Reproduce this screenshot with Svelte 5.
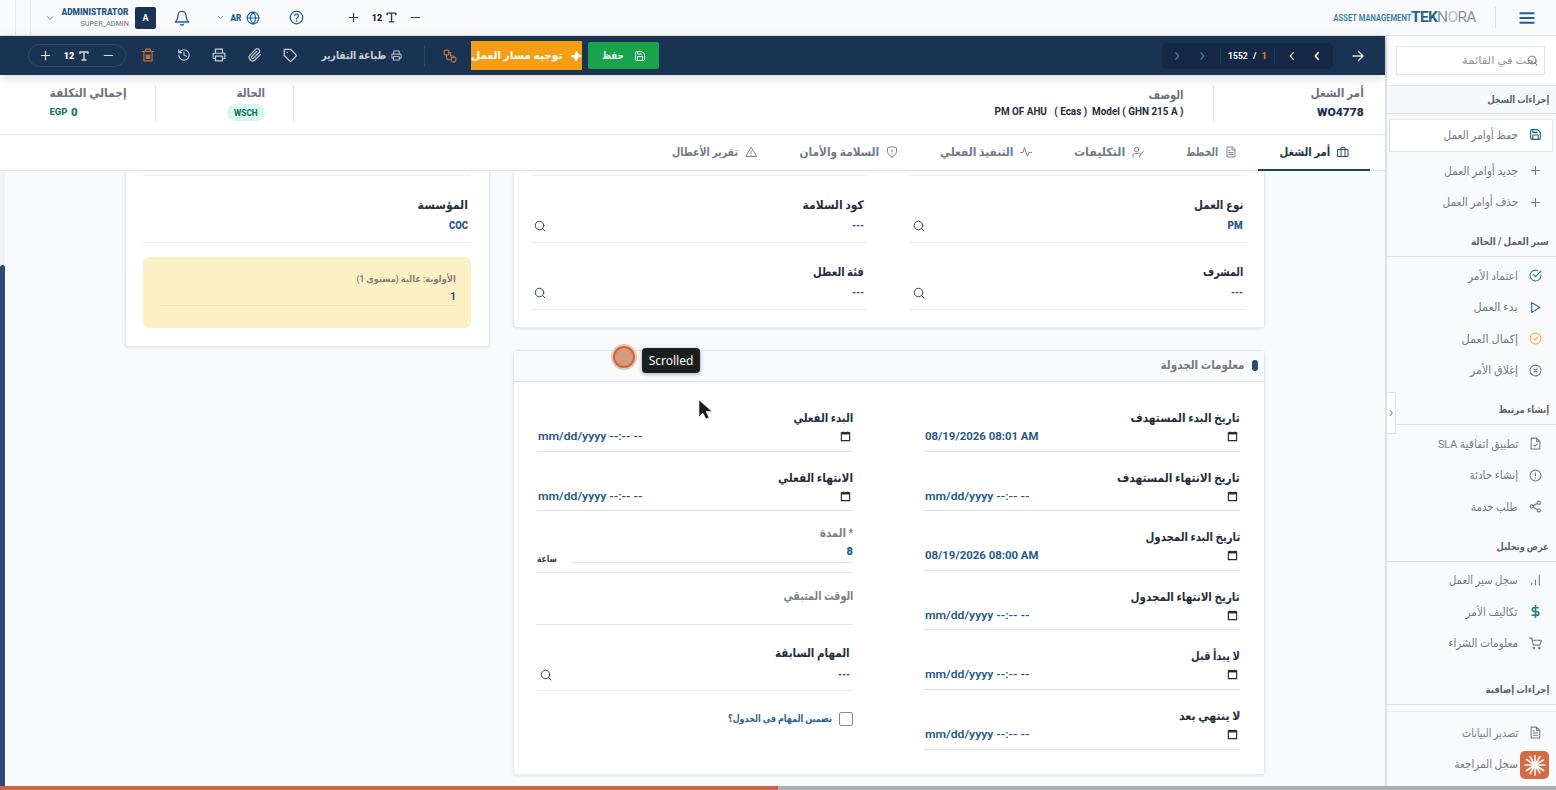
<script lang="ts">
  interface Field {
    label: string;
    width: number;
    value?: string;
    valueWidth?: number;
  }

  interface Item {
    icon: string;
    text: string;
    width: number;
    tone?: string;
    active?: boolean;
  }

  interface Section {
    title: string;
    width: number;
    kind: string;
    items: Item[];
  }

  const icons: Record<string, string> = {
    menu: '<path d="M2 5h20M2 12h20M2 19h20"/>',
    minus: '<path d="M3 12h18"/>',
    plus: '<path d="M12 3v18M3 12h18"/>',
    add: '<path d="M12 4.500v15M4.500 12h15"/>',
    type: '<path d="M4 7V4h16v3M12 4v16M8 20h8"/>',
    help: '<circle cx="12" cy="12" r="10"/><path d="M9 9a3 3 0 0 1 6 1c0 2-3 2.500-3 4M12 17.500v.5"/>',
    globe: '<circle cx="12" cy="12" r="10"/><path d="M2 12h20M12 2c6 6 6 14 0 20M12 2c-6 6-6 14 0 20"/>',
    down: '<path d="M4 8l8 8 8-8"/>',
    bell: '<path d="M18 8A6 6 0 0 0 6 8c0 7-3 9-4 10h20c-1-1-4-3-4-10M10 21.500a2.500 2.500 0 0 0 4 0"/>',
    trash: '<path d="M2 6h20M5 6v16h14V6M8 6V2h8v4M9 12h6v6H9zM11 12v6M13 14v4"/>',
    history: '<path d="M3 12a9 9 0 1 0 9-9 9.700 9.700 0 0 0-6.700 2.700L3 8M3 3v5h5M12 7v5l4 2"/>',
    printer: '<path d="M6 9V2h12v7M6 18H2v-9h20v9h-4M6 14h12v8H6z"/>',
    clip: '<path d="M21.500 11l-9.200 9.200a6 6 0 0 1-8.500-8.500L13 2.500a4 4 0 0 1 5.700 5.700l-9.200 9.200a2 2 0 0 1-2.900-2.900L15 6"/>',
    tag: '<path d="M20.600 13.400l-7.200 7.200a2 2 0 0 1-2.800 0L2 12V2h10l8.600 8.600a2 2 0 0 1 0 2.800zM7 7h.1"/>',
    flow: '<rect x="2" y="2" width="8" height="8" rx="2"/><rect x="14" y="14" width="8" height="8" rx="3"/><path d="M6 10v5q0 3 3 3h5M10 6h3v6h5v2"/>',
    bolt: '<path d="M13 3l3 6 7 3-7 2-4 8-3-7-7-3 8-1z" fill="currentColor"/>',
    save: '<path d="M19 21H5a2 2 0 0 1-2-2V5a2 2 0 0 1 2-2h11l5 5v11a2 2 0 0 1-2 2zM17 21v-8H7v8M7 3v5h8"/>',
    left: '<path d="M15 4l-7 8 7 8"/>',
    right: '<path d="M9 4l7 8-7 8"/>',
    arrow: '<path d="M2 12h20M13 3l9 9-9 9"/>',
    search: '<circle cx="11" cy="11" r="8.500"/><path d="M17 17l5 5"/>',
    case: '<path d="M2 7h20v14H2zM8 21V3h8v18"/>',
    file: '<path d="M14 2H4v20h16V8zM14 2v6h6M8 13h8M8 17h8M8 9h2"/>',
    fileCheck: '<path d="M14 2H4v20h16V8zM14 2v6h6M9 15l2 2 4-4"/>',
    user: '<circle cx="9" cy="7" r="4.500"/><path d="M2 22v-3q0-4 5-4h5M15 14l3 3 5-7M17 17l-2 5"/>',
    pulse: '<path d="M23 13h-5l-3 8L9 3l-3 10H1"/>',
    shield: '<path d="M12 22s9-4 9-11V4l-9-3-9 3v7c0 7 9 11 9 11zM12 7v5M12 15.500v.5"/>',
    warning: '<path d="M12 3L1.500 21h21zM12 10v5M12 18v.5"/>',
    checkCircle: '<path d="M22 11v1a10 10 0 1 1-6-9.100M22 4L12 14l-4-4"/>',
    play: '<path d="M5 3l15 9-15 9z"/>',
    okCircle: '<circle cx="12" cy="12" r="10"/><path d="M8 12l3 3 5-5"/>',
    closeCircle: '<circle cx="12" cy="12" r="10"/><path d="M9 9l6 6M15 9l-6 6"/>',
    alert: '<circle cx="12" cy="12" r="10"/><path d="M12 7v5M12 16v.5"/>',
    share: '<circle cx="18" cy="5" r="3"/><circle cx="5" cy="12" r="3"/><circle cx="18" cy="19" r="3"/><path d="M8 10.500l7-4M8 13.500l7 4"/>',
    bars: '<path d="M5 20v-4M12 20v-9M19 20V3"/>',
    dollar: '<path d="M12 1v22M17 5H9.500a3.500 3.500 0 0 0 0 7h5a3.500 3.500 0 0 1 0 7H6" stroke-width="3"/>',
    cart: '<path d="M1 2h4l3 13h12l3-9H6"/><circle cx="9" cy="20.500" r="1.500"/><circle cx="19" cy="20.500" r="1.500"/>',
    calendar: '<path d="M3 4h18v17H3z" stroke-width="2.500"/><path d="M3 5h18" stroke-width="5"/><path d="M7 1v3M17 1v3"/>',
  };

  const tabs: Item[] = [
    { icon: 'case', text: 'أمر الشغل', width: 51, active: true },
    { icon: 'file', text: 'الخطط', width: 32 },
    { icon: 'user', text: 'التكليفات', width: 51 },
    { icon: 'pulse', text: 'التنفيذ الفعلي', width: 73 },
    { icon: 'shield', text: 'السلامة والأمان', width: 80 },
    { icon: 'warning', text: 'تقرير الأعطال', width: 66 },
  ];

  const sections: Section[] = [
    {
      title: 'إجراءات السجل',
      width: 62,
      kind: 'first',
      items: [
        { icon: 'save', text: 'حفظ أوامر العمل', width: 75, tone: 'blue', active: true },
        { icon: 'add', text: 'جديد أوامر العمل', width: 74 },
        { icon: 'add', text: 'حذف أوامر العمل', width: 76 },
      ],
    },
    {
      title: 'سير العمل / الحالة',
      width: 78,
      kind: '',
      items: [
        { icon: 'checkCircle', text: 'اعتماد الأمر', width: 50, tone: 'teal' },
        { icon: 'play', text: 'بدء العمل', width: 44, tone: 'blue' },
        { icon: 'okCircle', text: 'إكمال العمل', width: 57, tone: 'amber' },
        { icon: 'closeCircle', text: 'إغلاق الأمر', width: 48 },
      ],
    },
    {
      title: 'إنشاء مرتبط',
      width: 51,
      kind: '',
      items: [
        { icon: 'fileCheck', text: 'تطبيق اتفاقية SLA', width: 80 },
        { icon: 'alert', text: 'إنشاء حادثة', width: 49 },
        { icon: 'share', text: 'طلب خدمة', width: 47 },
      ],
    },
    {
      title: 'عرض وتحليل',
      width: 52,
      kind: '',
      items: [
        { icon: 'bars', text: 'سجل سير العمل', width: 69 },
        { icon: 'dollar', text: 'تكاليف الأمر', width: 52, tone: 'teal' },
        { icon: 'cart', text: 'معلومات الشراء', width: 70 },
      ],
    },
    {
      title: 'إجراءات إضافية',
      width: 64,
      kind: 'last',
      items: [
        { icon: 'file', text: 'تصدير البيانات', width: 56 },
        { icon: 'history', text: 'سجل المراجعة', width: 63 },
      ],
    },
  ];

  const lookups: Field[] = [
    { label: 'نوع العمل', width: 49, value: 'PM', valueWidth: 15 },
    { label: 'كود السلامة', width: 61, value: '---', valueWidth: 12 },
    { label: 'المشرف', width: 40, value: '---', valueWidth: 12 },
    { label: 'فئة العطل', width: 51, value: '---', valueWidth: 12 },
  ];

  const empty = 'mm/dd/yyyy --:-- --';

  const targetDates: Field[] = [
    { label: 'تاريخ البدء المستهدف', width: 109, value: '08/19/2026 08:01 AM', valueWidth: 113 },
    { label: 'تاريخ الانتهاء المستهدف', width: 123 },
    { label: 'تاريخ البدء المجدول', width: 95, value: '08/19/2026 08:00 AM', valueWidth: 113 },
    { label: 'تاريخ الانتهاء المجدول', width: 109 },
    { label: 'لا يبدأ قبل', width: 49 },
    { label: 'لا ينتهي بعد', width: 61 },
  ];

  const actualDates: Field[] = [
    { label: 'البدء الفعلي', width: 60 },
    { label: 'الانتهاء الفعلي', width: 75 },
  ];

  let includeTasks = $state(false);

  // Squeezes or stretches a run of text to its column width
  function fit(node: HTMLElement, width: number) {
    const natural = node.offsetWidth;
    if (natural) node.style.transform = `scaleX(${width / natural})`;
  }
</script>

{#snippet icon(name: string, size: number, cls = '')}
  <svg class="icon {cls}" width={size} height={size} viewBox="0 0 24 24">{@html icons[name]}</svg>
{/snippet}

{#snippet txt(text: string, width: number, cls = '')}
  <span class="txt {cls}" style:width="{width}px"><span class="run" use:fit={width}>{text}</span></span>
{/snippet}

{#snippet lookup(field: Field)}
  <div class="lookup">
    {@render txt(field.label, field.width, 'label')}
    <div class="lookup-row">
      {@render txt(field.value ?? '', field.valueWidth ?? 12, 'value')}
      {@render icon('search', 12, 'navy')}
    </div>
  </div>
{/snippet}

{#snippet dateField(field: Field)}
  <div class="date">
    {@render txt(field.label, field.width, 'label')}
    <div class="date-row">
      {@render icon('calendar', 11, 'black')}
      <bdi dir="ltr">{@render txt(field.value ?? empty, field.valueWidth ?? 104, field.value ? 'value' : 'value hint')}</bdi>
    </div>
  </div>
{/snippet}

<div class="page" dir="rtl">
  <header class="header">
    {@render icon('menu', 16, 'blue thick')}
    <span class="header-line"></span>
    <div class="brand" dir="ltr">
      {@render txt('ASSET MANAGEMENT', 78, 'brand-sub')}
      <span class="brand-name"><b>TEK</b>N<i>O</i>RA</span>
    </div>
    <div class="account" dir="ltr">
      <span class="edge-line"></span>
      <span class="edge-line wide-gap"></span>
      {@render icon('down', 8, 'grey')}
      <div class="who">
        {@render txt('ADMINISTRATOR', 67, 'who-name')}
        {@render txt('SUPER_ADMIN', 48, 'who-role')}
      </div>
      <span class="avatar">A</span>
      {@render icon('bell', 16, 'blue bell')}
      {@render icon('down', 7, 'grey')}
      {@render txt('AR', 11, 'lang')}
      {@render icon('globe', 14, 'blue')}
      {@render icon('help', 15, 'blue help')}
      {@render icon('plus', 11, 'dark')}
      {@render txt('12', 10, 'size')}
      {@render icon('type', 13, 'dark type')}
      {@render icon('minus', 11, 'dark last')}
    </div>
  </header>

  <div class="body">
    <aside class="sidebar">
      <div class="search">
        <div class="search-box">
          {@render txt('بحث في القائمة', 76, 'placeholder')}
          <span class="search-icon">{@render icon('search', 11)}</span>
        </div>
      </div>
      {#each sections as section (section.title)}
        <div class="section-title {section.kind}">{@render txt(section.title, section.width)}</div>
        <nav class="section {section.kind}">
          {#each section.items as item (item.text)}
            <div class="item" class:active={item.active}>
              {@render icon(item.icon, 13, item.tone ?? '')}
              {@render txt(item.text, item.width)}
            </div>
          {/each}
        </nav>
      {/each}
      <button class="collapse" aria-label="collapse">{@render icon('right', 8, 'thick')}</button>
    </aside>

    <main class="main">
      <div class="toolbar" dir="ltr">
        <div class="pill">
          {@render icon('plus', 11, 'pale')}
          {@render txt('12', 10, 'pill-size')}
          {@render icon('type', 12, 'pale')}
          {@render icon('minus', 11, 'pale')}
        </div>
        <div class="tools">
          {@render icon('trash', 14, 'rust')}
          {@render icon('history', 14)}
          {@render icon('printer', 14)}
          {@render icon('clip', 14)}
          {@render icon('tag', 15)}
        </div>
        <div class="reports">
          {@render txt('طباعة التقارير', 65)}
          {@render icon('printer', 11)}
        </div>
        <span class="bar-line"></span>
        {@render icon('flow', 14, 'rust')}
        <button class="route">
          {@render txt('توجيه مسار العمل', 91)}
          {@render icon('bolt', 12)}
        </button>
        <button class="save">
          {@render txt('حفظ', 22)}
          {@render icon('save', 12)}
        </button>
        <div class="pager">
          {@render icon('right', 10, 'dim')}
          {@render icon('right', 10, 'dim')}
          <div class="pages">
            {@render txt('1552', 20)}
            <span>/</span>
            <span class="current">1</span>
          </div>
          {@render icon('left', 10, 'thick')}
          {@render icon('left', 10, 'heavy')}
        </div>
        {@render icon('arrow', 12, 'pale')}
      </div>

      <div class="summary">
        <div class="cell order">
          {@render txt('أمر الشغل', 53, 'cap')}
          {@render txt('WO4778', 47, 'number')}
        </div>
        <div class="cell desc">
          {@render txt('الوصف', 35, 'cap')}
          <bdi dir="ltr">{@render txt('PM OF AHU   ( Ecas )  Model ( GHN 215 A )', 189, 'desc-text')}</bdi>
        </div>
        <div class="cell status">
          {@render txt('الحالة', 29, 'cap')}
          <span class="badge">{@render txt('WSCH', 24)}</span>
        </div>
        <div class="cell cost">
          {@render txt('إجمالي التكلفة', 77, 'cap')}
          <div class="money" dir="ltr">{@render txt('EGP', 18)}<b>0</b></div>
        </div>
      </div>

      <div class="tabs">
        {#each tabs as tab (tab.text)}
          <div class="tab" class:active={tab.active}>
            {@render icon(tab.icon, 12)}
            {@render txt(tab.text, tab.width)}
          </div>
        {/each}
      </div>

      <div class="content">
        <div class="column">
          <section class="card lookups">
            {#each lookups as field (field.label)}
              {@render lookup(field)}
            {/each}
          </section>

          <section class="card schedule">
            <h2 class="card-title">
              <span class="marker"></span>
              {@render txt('معلومات الجدولة', 84)}
            </h2>
            <div class="schedule-body">
              <div class="dates">
                {#each targetDates as field (field.label)}
                  {@render dateField(field)}
                {/each}
              </div>
              <div class="dates">
                {#each actualDates as field (field.label)}
                  {@render dateField(field)}
                {/each}
                <div class="duration">
                  {@render txt('* المدة', 33, 'muted')}
                  <div class="duration-row">
                    <span class="duration-value">8</span>
                    {@render txt('ساعة', 20, 'unit')}
                  </div>
                </div>
                <div class="remaining">{@render txt('الوقت المتبقي', 70, 'muted')}</div>
                <div class="previous">{@render lookup({ label: 'المهام السابقة', width: 75, value: '---', valueWidth: 12 })}</div>
                <label class="check">
                  <input type="checkbox" bind:checked={includeTasks} />
                  {@render txt('تضمين المهام في الجدول؟', 104)}
                </label>
              </div>
            </div>
          </section>
        </div>

        <section class="card side">
          <div class="lookup">
            {@render txt('المؤسسة', 50, 'label')}
            <div class="lookup-row">{@render txt('COC', 19, 'value')}</div>
          </div>
          <div class="priority">
            {@render txt('الأولوية: عالية (مستوى 1)', 99)}
            <div class="priority-value">1</div>
          </div>
        </section>

        <span class="scroll-track"><span class="scroll-thumb"></span></span>
      </div>
    </main>
  </div>

  <div class="progress"><span class="progress-done"></span></div>

  <span class="click-dot"></span>
  <span class="tooltip" dir="ltr">Scrolled</span>
  <svg class="cursor" width="15" height="21" viewBox="0 0 15 21"><path d="M1 1v17l4-4 3 6 3-1.500-3-6h6z" /></svg>
  <span class="assistant">
    <svg width="24" height="24" viewBox="0 0 24 24">
      <path d="M12 12V2.500M12 12l5-8.500M12 12l8.500-5M12 12h10M12 12l8.500 5.500M12 12l5 8M12 12v10M12 12l-5 8.500M12 12l-8.500 5.500M12 12H2M12 12L3.500 6.500M12 12L7 3.500" />
    </svg>
  </span>
</div>

<style>
  :global(body) {
    margin: 0;
    overflow: hidden;
  }

  .page,
  .page * {
    box-sizing: border-box;
  }

  .page {
    position: relative;
    display: flex;
    flex-direction: column;
    width: 1556px;
    height: 790px;
    background: #f8fafb;
    color: #6b7280;
    font-family: Roboto, 'DejaVu Sans', sans-serif;
    font-size: 11px;
    line-height: 14px;
    overflow: hidden;
  }

  .icon {
    flex: none;
    fill: none;
    stroke: currentColor;
    stroke-width: 2;
    stroke-linecap: round;
    stroke-linejoin: round;
  }

  .icon.blue { color: #1d5f94; }
  .icon.navy { color: #2c4a68; }
  .icon.grey { color: #7d858f; stroke-width: 3; }
  .icon.dark { color: #333d49; stroke-width: 2.6; }
  .icon.black { color: #2a2a2a; stroke-linejoin: miter; stroke-linecap: butt; }
  .icon.teal { color: #2a8078; }
  .icon.amber { color: #f0b545; }
  .icon.rust { color: #bd7440; }
  .icon.dim { color: #50749a; stroke-width: 3; }
  .icon.pale { color: #d5e2e8; stroke-width: 2.7; }
  .icon.thick { stroke-width: 3; }
  .icon.heavy { stroke-width: 4; }

  .txt {
    display: inline-flex;
    flex: none;
    justify-content: center;
    white-space: pre;
  }

  .run {
    flex: none;
    display: inline-block;
  }

  /* header */

  .header {
    display: flex;
    align-items: center;
    flex: none;
    height: 36px;
    padding-right: 21px;
    border-bottom: 1px solid #dfe4e8;
  }

  .header-line {
    width: 1px;
    height: 21px;
    margin: 0 23px 0 19px;
    background: #dde2e7;
  }

  .brand {
    display: flex;
    align-items: center;
  }

  .brand-sub {
    color: #3c7ba3;
    font-size: 8.5px;
    font-weight: 600;
  }

  .brand-name {
    width: 65px;
    color: #8b949c;
    font-size: 15.5px;
    letter-spacing: -0.7px;
    line-height: 18px;
    padding-bottom: 1px;
  }

  .brand-name b { color: #2a6389; }
  .brand-name i { color: #b5bfc3; font-style: normal; }

  .account {
    display: flex;
    align-items: center;
    height: 35px;
    margin-right: auto;
    padding-left: 15px;
  }

  .edge-line {
    width: 1px;
    height: 35px;
    margin-right: 14px;
    background: #e5e9ed;
  }

  .edge-line.wide-gap { margin-right: 15px; }

  .who {
    display: flex;
    flex-direction: column;
    align-items: flex-end;
    width: 67px;
    margin: 0 6px 0 8px;
  }

  .who-name {
    color: #1e5680;
    font-size: 9px;
    font-weight: 900;
    line-height: 12px;
  }

  .who-role {
    color: #6f7882;
    font-size: 8px;
    line-height: 12px;
  }

  .avatar {
    width: 21px;
    height: 22px;
    border-radius: 2px;
    background: #1b3354;
    color: #fff;
    font-size: 9px;
    font-weight: 700;
    line-height: 22px;
    text-align: center;
  }

  .account .bell { margin: 0 27px 0 18px; }
  .lang { margin: 0 5px 0 6px; color: #1d5f94; font-size: 9px; font-weight: 900; }
  .account .help { margin: 0 44px 0 29px; }
  .size { margin: 0 3px 0 13px; color: #222b35; font-size: 9px; font-weight: 900; }
  .account .last { margin-left: 12px; }

  /* body */

  .body {
    display: flex;
    flex: 1;
    min-height: 0;
  }

  .sidebar {
    position: relative;
    flex: none;
    width: 171px;
    border-left: 2px solid #dde1e5;
    overflow: hidden;
  }

  .search {
    height: 50px;
    padding: 10px 11px 0 9px;
    background: #fff;
    border-bottom: 1px solid #e5e8ec;
  }

  .search-box {
    position: relative;
    display: flex;
    align-items: center;
    height: 29px;
    padding-right: 6px;
    border: 1px solid #e1e4e8;
    background: #fff;
  }

  .placeholder { color: #8c939c; font-size: 11px; }

  .search-icon {
    position: absolute;
    top: 8px;
    right: 6px;
    display: flex;
  }

  .section-title {
    display: flex;
    align-items: flex-end;
    height: 39px;
    padding: 0 7px 7px 0;
    border-bottom: 1px solid #dfe3e8;
    color: #5c6570;
    font-size: 10px;
    font-weight: 700;
  }

  .section-title.first { height: 28px; padding-bottom: 6px; background: #f6f8f9; }
  .section-title.last { height: 46px; }

  .section {
    padding-top: 3px;
  }

  .section.first { padding-top: 5px; }

  .section.last {
    margin-top: 6px;
    padding-top: 5px;
    border-top: 1px solid #e5e8ec;
  }

  .item {
    display: flex;
    align-items: center;
    gap: 11px;
    height: 31.5px;
    padding-right: 14px;
    color: #757d87;
    font-size: 11.5px;
  }

  .item.active {
    height: 33px;
    margin: 0 3px 3px 2px;
    padding: 0 10px 2px 0;
    border: 1px solid #e3e7eb;
    background: #fff;
  }

  .collapse {
    position: absolute;
    top: 356px;
    left: 0;
    display: flex;
    align-items: center;
    justify-content: center;
    width: 9px;
    height: 42px;
    padding: 0;
    border: 1px solid #e0e4e8;
    border-left: 0;
    background: #fff;
    color: #6b7280;
  }

  .main {
    display: flex;
    flex-direction: column;
    flex: 1;
    min-width: 0;
  }

  .toolbar {
    position: relative;
    z-index: 2;
    display: flex;
    align-items: center;
    flex: none;
    height: 39px;
    padding: 0 21px 0 28px;
    background: #1b3352;
    box-shadow: 0 3px 10px rgba(0, 0, 0, 0.14);
    color: #c3d2dc;
  }

  .pill {
    display: flex;
    align-items: center;
    width: 98px;
    height: 23px;
    padding-left: 11px;
    border: 1px solid #344c67;
    border-radius: 12px;
  }

  .pill-size { margin: 0 4px 0 13px; color: #fff; font-size: 9px; font-weight: 900; }
  .pill .icon:last-child { margin-left: 13px; }

  .tools {
    display: flex;
    gap: 21.5px;
    margin-left: 15px;
  }

  .reports {
    display: flex;
    align-items: center;
    gap: 5px;
    margin-left: 23px;
    font-size: 11px;
    font-weight: 700;
  }

  .bar-line {
    width: 1px;
    height: 20px;
    margin: 0 18px 0 22px;
    background: #2f4764;
  }

  .toolbar button {
    display: flex;
    align-items: center;
    padding: 0;
    border: 0;
    color: #fff;
    font: 700 11px/14px Roboto, 'DejaVu Sans', sans-serif;
  }

  .route {
    gap: 8px;
    width: 111px;
    height: 29px;
    margin-left: 14px;
    background: #f59e14;
    overflow: hidden;
  }

  .toolbar .save {
    justify-content: center;
    gap: 10px;
    width: 71px;
    height: 27px;
    margin-left: 6px;
    border-radius: 2px;
    background: #19a34c;
    color: #e8f5ea;
  }

  .pager {
    display: flex;
    align-items: center;
    width: 171px;
    height: 26px;
    margin: 0 19px 0 auto;
    padding-left: 10px;
    border-radius: 5px;
    background: #152944;
    gap: 15px;
    color: #fff;
  }

  .pages {
    display: flex;
    gap: 5px;
    height: 16px;
    margin: 0 -3px 0 -2px;
    padding: 0 7px;
    border: solid #243b59;
    border-width: 0 1px;
    font-size: 9.5px;
    font-weight: 700;
    line-height: 16px;
  }

  .current { color: #d78a3c; }

  .summary {
    display: flex;
    flex: none;
    height: 60px;
    padding: 11px 21px 12px 50px;
    border-bottom: 1px solid #e3e6e9;
    background: #fff;
  }

  .cell {
    display: flex;
    flex-direction: column;
    align-items: flex-start;
    gap: 5px;
  }

  .cap { color: #6b7480; font-size: 12px; font-weight: 700; }
  .number { color: #1a344e; font-size: 11.5px; font-weight: 900; }
  .order { width: 151px; border-left: 1px solid #e7eaed; }
  .desc { width: 920px; padding: 2px 29px 0 0; gap: 3px; border-left: 1px solid #e7eaed; }
  .desc-text { color: #1f2c3a; font-size: 11px; font-weight: 700; }
  .status { width: 138px; padding-right: 28px; gap: 4px; border-left: 1px solid #e7eaed; }
  .cost { flex: 1; }
  .cost .cap { margin-right: 28px; }

  .badge {
    height: 17px;
    padding: 2px 7px;
    border-radius: 9px;
    background: #d7f6ef;
    color: #157262;
    font-size: 9px;
    font-weight: 800;
  }

  .money {
    display: flex;
    align-self: flex-end;
    gap: 3px;
    color: #1b7d64;
    font-size: 9px;
    font-weight: 900;
  }

  .money b { font-size: 11.5px; }

  .tabs {
    display: flex;
    flex: none;
    height: 36px;
    padding-right: 15px;
    border-bottom: 1px solid #e3e6e9;
    background: #fff;
  }

  .tab {
    display: flex;
    align-items: center;
    gap: 7px;
    height: 36px;
    padding: 0 21px 3px;
    color: #737b85;
    font-size: 11.5px;
    font-weight: 700;
  }

  .tab .icon { color: #767e88; stroke-width: 1.9; }
  .tab.active .icon { color: #2c3f52; }

  .tab.active {
    border-bottom: 2px solid #24435f;
    color: #20364c;
    padding-bottom: 1px;
  }

  .content {
    position: relative;
    display: flex;
    align-items: flex-start;
    flex: 1;
    gap: 23px;
    min-height: 0;
    padding-right: 120px;
  }

  .column {
    display: flex;
    flex-direction: column;
    gap: 22px;
    width: 752px;
  }

  .card {
    flex: none;
    border: 1px solid #e6e9ec;
    border-top: 0;
    border-radius: 0 0 4px 4px;
    background: #fff;
    box-shadow: 0 1px 3px rgba(20, 40, 60, 0.1);
  }

  .lookups {
    display: grid;
    grid-template-columns: 336px 336px;
    align-content: start;
    gap: 0 43px;
    height: 157px;
    padding: 4px 18px 0 17px;
  }

  .lookup {
    display: flex;
    flex-direction: column;
    align-items: flex-start;
    height: 66.5px;
    padding: 22px 3px 0;
    border-bottom: 1px solid #e9ebee;
  }

  .lookups .lookup:nth-child(-n + 2),
  .side .lookup {
    border-top: 1px solid #eceef0;
    height: 68px;
  }

  .lookup-row {
    display: flex;
    align-items: center;
    justify-content: space-between;
    width: 100%;
    height: 16px;
    margin-top: 6px;
  }

  .label { color: #25303d; font-size: 12px; font-weight: 700; }
  .value { color: #245a87; font-size: 10.5px; font-weight: 900; }
  .date .value { font-size: 11px; font-weight: 700; }
  .date .hint { font-weight: 600; }
  .muted { color: #7b828b; font-size: 12px; font-weight: 700; }

  .schedule {
    height: 425px;
    border-top: 1px solid #e6e9ec;
    border-radius: 4px;
  }

  .card-title {
    display: flex;
    align-items: center;
    gap: 7px;
    height: 31px;
    margin: 0;
    padding: 0 6px 2px 0;
    border-bottom: 1px solid #e2e5e9;
    background: #f8fafb;
    color: #747c86;
    font-size: 12px;
    font-weight: 700;
  }

  .marker {
    width: 6px;
    height: 11px;
    border-radius: 3px;
    background: #264b7c;
  }

  .schedule-body {
    display: flex;
    justify-content: space-between;
    padding: 10px 24px 0 23px;
  }

  .dates {
    width: 316px;
  }

  .date {
    display: flex;
    flex-direction: column;
    height: 59.6px;
    padding-top: 19px;
    border-bottom: 1px solid #dfe2e6;
    align-items: flex-start;
  }

  .date-row {
    display: flex;
    align-items: center;
    justify-content: space-between;
    width: 100%;
    height: 16px;
    margin-top: 4px;
    padding: 0 2px 0 1px;
  }

  .date-row .icon { margin-bottom: 1px; }

  .duration {
    height: 62px;
    padding-top: 15px;
    border-bottom: 1px solid #e6e8eb;
  }

  .duration-row {
    display: flex;
    align-items: flex-end;
    gap: 15px;
    height: 22px;
  }

  .duration-value {
    flex: 1;
    height: 18px;
    border-bottom: 1px solid #e6e8eb;
    color: #245a87;
    font-size: 11px;
    font-weight: 900;
  }

  .unit { position: relative; top: 3px; color: #333c47; font-size: 9px; font-weight: 700; }

  .remaining {
    height: 52px;
    padding-top: 16px;
    border-bottom: 1px solid #e0e3e7;
  }

  .previous .lookup { height: 66px; padding-top: 21px; }
  .previous .lookup-row { margin-top: 7px; }

  .check {
    display: flex;
    align-items: center;
    gap: 7px;
    margin-top: 21px;
    color: #2a6592;
    font-size: 10px;
    font-weight: 700;
  }

  .check input {
    appearance: none;
    width: 14px;
    height: 14px;
    margin: 0;
    border: 1px solid #888;
    border-radius: 2px;
    background: #fff;
  }

  .side {
    width: 365px;
    height: 176px;
    padding: 4px 18px 0 17px;
  }

  .priority {
    height: 71px;
    margin-top: 14px;
    padding: 15px 15px 0 17px;
    border-radius: 6px;
    background: #fcf0c5;
    color: #8a7a78;
    font-size: 9px;
    font-weight: 700;
  }

  .priority-value {
    height: 20px;
    padding-top: 4px;
    border-bottom: 1px solid #eae5c5;
    color: #34446e;
    font-size: 10px;
  }

  .scroll-track {
    position: absolute;
    top: 0;
    bottom: 0;
    left: 0;
    width: 5px;
    background: #f0f2f3;
  }

  .scroll-thumb {
    display: block;
    height: 100%;
    margin-top: 94px;
    border-radius: 3px 3px 0 0;
    background: #2b4a75;
  }

  .progress {
    z-index: 3;
    flex: none;
    height: 4px;
    background: #adafb0;
  }

  .progress-done {
    display: block;
    width: 50%;
    height: 4px;
    margin-right: auto;
    background: #cc6547;
  }

  /* overlays */

  .click-dot {
    position: absolute;
    top: 346px;
    left: 613px;
    width: 22px;
    height: 22px;
    border: 2px solid #d9603b;
    border-radius: 50%;
    background: #d69a7e;
    box-shadow: 0 0 0 2px #ddcab4;
  }

  .tooltip {
    position: absolute;
    top: 348px;
    left: 642px;
    width: 58px;
    height: 25px;
    border-radius: 4px;
    background: #1c1d1d;
    box-shadow: 0 1px 4px rgba(0, 0, 0, 0.35);
    color: #fff;
    font: 12px/25px 'Noto Sans', sans-serif;
    text-align: center;
  }

  .cursor {
    position: absolute;
    top: 399px;
    left: 698px;
    fill: #1c1c1c;
    stroke: #fff;
    stroke-width: 0.5;
  }

  .assistant {
    position: absolute;
    z-index: 4;
    top: 751px;
    left: 1520px;
    display: flex;
    align-items: center;
    justify-content: center;
    width: 29px;
    height: 28px;
    border-radius: 5px;
    background: #d66a43;
  }

  .assistant svg {
    fill: none;
    stroke: #fff;
    stroke-width: 1.5;
    stroke-linecap: round;
  }
</style>
